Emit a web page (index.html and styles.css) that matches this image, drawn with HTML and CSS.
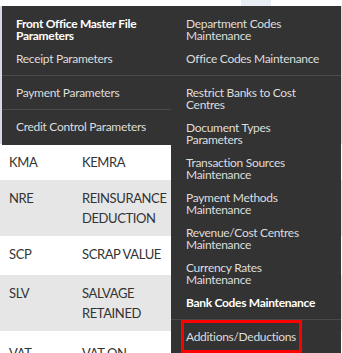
FILE: index.html
```html
<!DOCTYPE html>
<html lang="en">

<head>
  <meta charset="UTF-8">
  <meta name="viewport" content="width=device-width, initial-scale=1.0" />
  <title>Setups</title>
  <link rel="stylesheet" href="styles.css">
</head>

<body>

  <div class="topbar">
    <span class="tab"></span>
  </div>

  <div class="content">
    <div class="table-head"></div>
    <table class="grid">
      <tr>
        <td class="code">KMA</td>
        <td class="desc">KEMRA</td>
        <td></td>
      </tr>
      <tr class="alt">
        <td class="code">NRE</td>
        <td class="desc">REINSURANCE DEDUCTION</td>
        <td></td>
      </tr>
      <tr class="tall">
        <td class="code">SCP</td>
        <td class="desc">SCRAP VALUE</td>
        <td></td>
      </tr>
      <tr class="alt">
        <td class="code">SLV</td>
        <td class="desc">SALVAGE RETAINED</td>
        <td></td>
      </tr>
      <tr class="last">
        <td class="code">VAT</td>
        <td class="desc">VAT ON</td>
        <td></td>
      </tr>
    </table>
  </div>

  <!-- dropdown menu over the table -->
  <div class="menu">
    <ul class="menu-col">
      <li class="menu-item strong">Front Office Master File<br>Parameters</li>
      <li class="menu-item">Receipt Parameters</li>
      <li class="menu-sep"></li>
      <li class="menu-item">Payment Parameters</li>
      <li class="menu-sep"></li>
      <li class="menu-item">Credit Control Parameters</li>
    </ul>
    <ul class="menu-col right">
      <li class="menu-item">Department Codes<br>Maintenance</li>
      <li class="menu-item">Office Codes Maintenance</li>
      <li class="menu-sep"></li>
      <li class="menu-item">Restrict Banks to Cost<br>Centres</li>
      <li class="menu-item">Document Types<br>Parameters</li>
      <li class="menu-item">Transaction Sources<br>Maintenance</li>
      <li class="menu-item">Payment Methods<br>Maintenance</li>
      <li class="menu-item">Revenue/Cost Centres<br>Maintenance</li>
      <li class="menu-item">Currency Rates<br>Maintenance</li>
      <li class="menu-item strong">Bank Codes Maintenance</li>
      <li class="menu-sep"></li>
      <li class="menu-item"><span class="marked">Additions/Deductions</span></li>
    </ul>
  </div>

</body>

</html>
```

FILE: styles.css
```css
* {
  margin: 0;
  padding: 0;
  box-sizing: border-box;
}

body {
  background: #ffffff;
  font-family: Lato, 'Open Sans', sans-serif;
  color: #333333;
  overflow: hidden;
}

.topbar {
  height: 6px;
  background: #ffffff;
}

.topbar .tab {
  display: block;
  width: 30px;
  height: 6px;
  margin-left: 241px;
  background: #e9edf4;
}

.table-head {
  height: 138px;
  background: #d6dbe3;
}

.grid {
  width: 100%;
  border-collapse: collapse;
  font-size: 13px;
  line-height: 20px;
  letter-spacing: -0.4px;
}

.grid td {
  padding: 8px 9px;
  vertical-align: top;
  text-transform: uppercase;
}

.grid .code {
  width: 73px;
}

.grid .desc {
  width: 96px;
}

.grid tr {
  background: #ffffff;
}

.grid tr.alt {
  background: #e6e6e6;
}

.grid tr.tall td {
  padding-bottom: 11px;
}

.grid tr.last td {
  padding-top: 12px;
}

/* dropdown */
.menu {
  position: absolute;
  top: 6px;
  left: 2px;
  display: flex;
  align-items: flex-start;
}

.menu-col {
  list-style: none;
  width: 169px;
  background: #333333;
  padding: 6px 0 6.5px;
}

.menu-col.right {
  width: 170px;
  padding-bottom: 20px;
}

.menu-item {
  font-size: 12px;
  line-height: 12px;
  letter-spacing: -0.3px;
  padding: 5.5px 14px;
  color: #dddddd;
  white-space: nowrap;
}

.menu-col.right .menu-item {
  padding-left: 15px;
}

.menu-item.strong {
  color: #ffffff;
  font-weight: bold;
}

.menu-sep {
  height: 1px;
  margin: 5px 0;
  background: #4a4a4a;
}

.marked {
  position: relative;
}

.marked::after {
  content: '';
  position: absolute;
  left: -5px;
  right: -6px;
  top: -9px;
  bottom: -9px;
  border: 3px solid #ff0000;
}
```
